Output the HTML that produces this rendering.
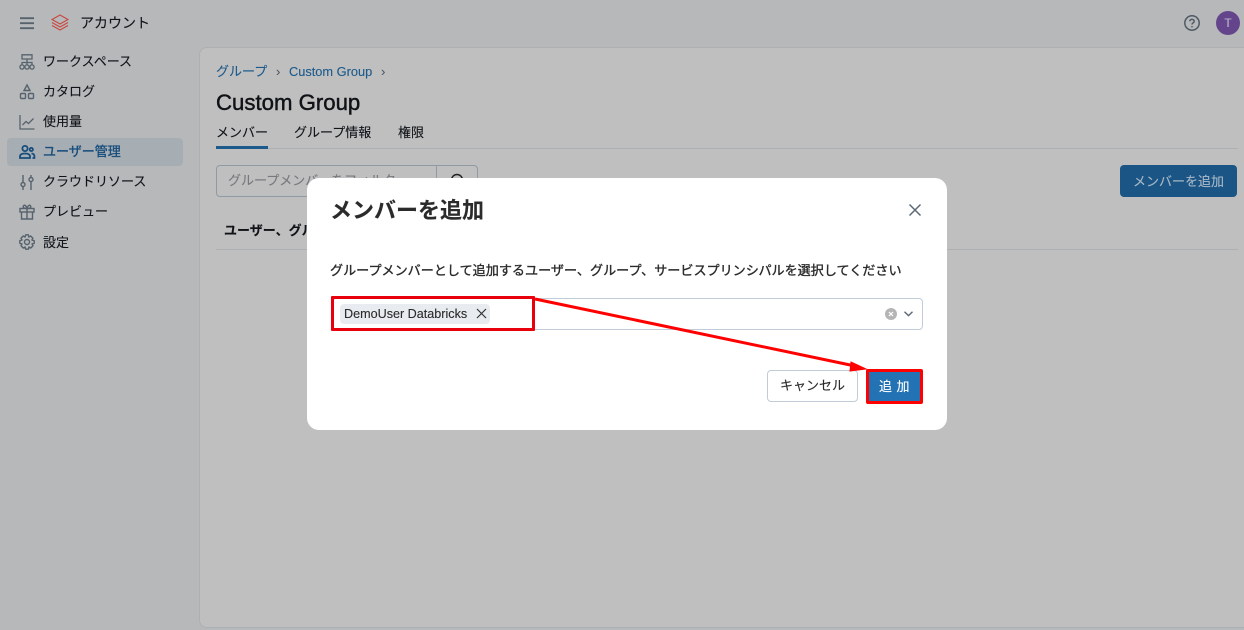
<!DOCTYPE html>
<html lang="ja"><head><meta charset="utf-8"><style>
*{box-sizing:border-box}
html,body{margin:0;padding:0;width:1244px;height:630px;overflow:hidden;background:#b7b8ba;font-family:"Liberation Sans","Noto Sans CJK JP",sans-serif;color:#111;-webkit-text-stroke:.12px currentColor}
.a{position:absolute;white-space:nowrap}
.n{position:absolute;left:43px;font-size:13px;line-height:20px;color:#101418;white-space:nowrap}
svg{position:absolute;overflow:visible}
</style></head><body>
<div class="a" style="left:199px;top:47px;width:1100px;height:581px;background:#bfbfbf;border:1px solid #adb0b3;border-radius:8px"></div>
<svg style="left:20px;top:17px" width="14" height="12" fill="none" stroke="#56626d" stroke-width="1.8"><path d="M0 1.2H14M0 6.2H14M0 11.2H14"/></svg>
<svg style="left:51px;top:14px" width="18" height="18" fill="none" stroke="#c8473f" stroke-width="1.1"><path d="M9 1L17 5.5 9 10 1 5.5zM1 8.5L9 13 17 8.5M1 11.5L9 16 17 11.5"/></svg>
<div class="a" style="left:80px;top:13px;font-size:14px;line-height:20px;color:#101418">アカウント</div>
<svg style="left:1184px;top:15px" width="16" height="16" fill="none" stroke="#4f5a65" stroke-width="1.5"><circle cx="8" cy="8" r="7.2"/><path d="M5.8 6.2C5.8 3.8 10.2 3.8 10.2 6.2 10.2 7.8 8 7.8 8 9.5"/><path d="M8 11v1.4"/></svg>
<div class="a" style="left:1216px;top:11px;width:24px;height:24px;border-radius:50%;background:#64458c;color:#b9b2c8;font-size:12px;line-height:24px;text-align:center">T</div>
<div class="a" style="left:7px;top:138px;width:176px;height:28px;background:#a6adb3;border-radius:4px"></div>
<svg style="left:19px;top:54px" width="16" height="16" fill="none" stroke="#56626d" stroke-width="1.3"><path d="M3 .8H13V5H3zM8 5V8.5M3 11V8.5H13V11M8 8.5V11"/><circle cx="3" cy="13" r="2.1"/><circle cx="8" cy="13" r="2.1"/><circle cx="13" cy="13" r="2.1"/></svg>
<svg style="left:19px;top:84px" width="16" height="16" fill="none" stroke="#56626d" stroke-width="1.4"><path d="M8 1L11 6.5H5z"/><rect x="1.5" y="9.5" width="5" height="5" rx="1"/><rect x="9.5" y="9.5" width="5" height="5" rx="1"/></svg>
<svg style="left:19px;top:114px" width="16" height="16" fill="none" stroke="#56626d" stroke-width="1.3"><path d="M1 1V15H15.5M3.5 11L7 7.5 9.5 9.5 14.5 4.5"/></svg>
<svg style="left:19px;top:144px" width="16" height="16" fill="none" stroke="#174d7c" stroke-width="1.8"><circle cx="6" cy="4.5" r="2.6"/><path d="M1 14V12.5C1 10.5 3 9.5 6 9.5S11 10.5 11 12.5V14H1z"/><circle cx="12.3" cy="5.5" r="1.6"/><path d="M12.5 9.5C14.5 9.5 15.4 10.8 15.4 12.3V14H13.5"/></svg>
<svg style="left:20px;top:174px" width="15" height="16" fill="none" stroke="#56626d" stroke-width="1.4"><path d="M3 1V8M3 13V16M11 1V3M11 8V16"/><circle cx="3" cy="10.5" r="2"/><circle cx="11" cy="5.5" r="2"/></svg>
<svg style="left:19px;top:204px" width="16" height="16" fill="none" stroke="#56626d" stroke-width="1.4"><rect x="1" y="4.5" width="14" height="3.5"/><path d="M2.5 8V15H13.5V8M8 4.5V15M8 4.5C5 4.5 3.5 3.5 4.5 1.8S7.5 2 8 4.5C8.5 2 10.5.2 11.5 1.8S11 4.5 8 4.5z"/></svg>
<svg style="left:19px;top:234px" width="16" height="16" fill="none" stroke="#56626d" stroke-width="1.4"><circle cx="8" cy="8" r="2.5"/><path d="M6.7.8H9.3L9.8 3 11.7 2 13.9 4.2 12.9 6.1 15.2 6.7V9.3L13 9.9 14 11.8 11.8 14 9.9 13 9.3 15.2H6.7L6.1 13 4.2 14 2 11.8 3 9.9.8 9.3V6.7L3 6.1 2 4.2 4.2 2 6.1 3z" stroke-linejoin="round"/></svg>
<div class="n" style="top:52px">ワークスペース</div>
<div class="n" style="top:82px">カタログ</div>
<div class="n" style="top:112px">使用量</div>
<div class="n" style="top:142px;color:#174d7c;-webkit-text-stroke:.35px #174d7c">ユーザー管理</div>
<div class="n" style="top:172px">クラウドリソース</div>
<div class="n" style="top:202px">プレビュー</div>
<div class="n" style="top:233px">設定</div>
<div class="a" style="left:216px;top:62px;font-size:13px;line-height:20px;color:#1d5a8c">グループ</div>
<div class="a" style="left:276px;top:62px;font-size:13px;line-height:20px;color:#4f5a65">›</div>
<div class="a" style="left:289px;top:62px;font-size:12.8px;line-height:20px;color:#1d5a8c">Custom Group</div>
<div class="a" style="left:381px;top:62px;font-size:13px;line-height:20px;color:#4f5a65">›</div>
<div class="a" style="left:216px;top:88px;font-size:22.2px;line-height:30px;color:#0f1216;-webkit-text-stroke:.45px #0f1216">Custom Group</div>
<div class="a" style="left:216px;top:123px;font-size:13px;line-height:20px;color:#101418">メンバー</div>
<div class="a" style="left:294px;top:123px;font-size:13px;line-height:20px;color:#101418">グループ情報</div>
<div class="a" style="left:398px;top:123px;font-size:13px;line-height:20px;color:#101418">権限</div>
<div class="a" style="left:216px;top:148px;width:1022px;height:1px;background:#adb0b3"></div>
<div class="a" style="left:216px;top:146px;width:52px;height:3px;background:#1d5a8c"></div>
<div class="a" style="left:216px;top:165px;width:262px;height:32px;border:1px solid #8f9aa5;border-radius:4px"></div>
<div class="a" style="left:436px;top:165px;width:1px;height:32px;background:#8f9aa5"></div>
<div class="a" style="left:228px;top:171px;font-size:13px;line-height:20px;color:#75797d">グループメンバーをフィルター</div>
<svg style="left:450px;top:173px" width="16" height="16" fill="none" stroke="#222" stroke-width="1.5"><circle cx="7" cy="7" r="5.5"/><path d="M11 11L15 15"/></svg>
<div class="a" style="left:1120px;top:165px;width:117px;height:32px;background:#1a5586;border-radius:4px;color:#a9b9c6;font-size:13px;line-height:33px;text-align:center">メンバーを追加</div>
<div class="a" style="left:224px;top:221px;font-size:13px;line-height:20px;font-weight:700;color:#0f1216">ユーザー、グループ</div>
<div class="a" style="left:216px;top:249px;width:1022px;height:1px;background:#adb0b3"></div>

<div class="a" style="left:307px;top:178px;width:640px;height:252px;background:#fff;border-radius:12px"></div>
<div class="a" style="left:330px;top:196px;font-size:22px;line-height:30px;font-weight:700;color:#2b2b2b">メンバーを追加</div>
<svg style="left:909px;top:204px" width="12" height="12" fill="none" stroke="#5c6873" stroke-width="1.5"><path d="M.5.5L11.5 11.5M11.5.5L.5 11.5"/></svg>
<div class="a" style="left:330px;top:262px;font-size:13.08px;line-height:18px;-webkit-text-stroke:.35px #2b2b2b;color:#2b2b2b">グループメンバーとして追加するユーザー、グループ、サービスプリンシパルを選択してください</div>
<div class="a" style="left:332px;top:298px;width:591px;height:32px;border:1px solid #c0ccd8;border-radius:4px"></div>
<div class="a" style="left:340px;top:304px;width:150px;height:20px;background:#e8ebef;border-radius:4px"></div>
<div class="a" style="left:344px;top:305px;font-size:12.6px;line-height:18px;color:#2b2b2b">DemoUser Databricks</div>
<svg style="left:477px;top:309px" width="9" height="9" fill="none" stroke="#333" stroke-width="1.2"><path d="M0 0L9 9M9 0L0 9"/></svg>
<svg style="left:885px;top:308px" width="12" height="12"><circle cx="6" cy="6" r="6" fill="#b5b5b5"/><path d="M4 4L8 8M8 4L4 8" stroke="#fff" stroke-width="1.2"/></svg>
<svg style="left:904px;top:311px" width="9" height="6" fill="none" stroke="#5c6873" stroke-width="1.4"><path d="M.5.8L4.5 4.6 8.5.8"/></svg>
<div class="a" style="left:767px;top:370px;width:91px;height:32px;background:#fff;border:1px solid #c0ccd8;border-radius:4px;color:#2b2b2b;font-size:13px;line-height:30px;text-align:center">キャンセル</div>
<div class="a" style="left:868px;top:371px;width:53px;height:31px;background:#2272b4;color:#fff;font-size:13px;letter-spacing:.5px;line-height:31px;text-align:center">追 加</div>
<div class="a" style="left:866px;top:369px;width:57px;height:35px;border:3px solid #f00;border-radius:2px"></div>
<div class="a" style="left:331px;top:296px;width:204px;height:35px;border:3px solid #e8000d;border-radius:1px"></div>
<svg style="left:0;top:0" width="1244" height="630"><path d="M535 299L855 366" stroke="#f00" stroke-width="3" fill="none"/><path d="M866 369L851 362 850 371z" fill="#f00" stroke="#f00" stroke-width="1"/></svg>
</body></html>
